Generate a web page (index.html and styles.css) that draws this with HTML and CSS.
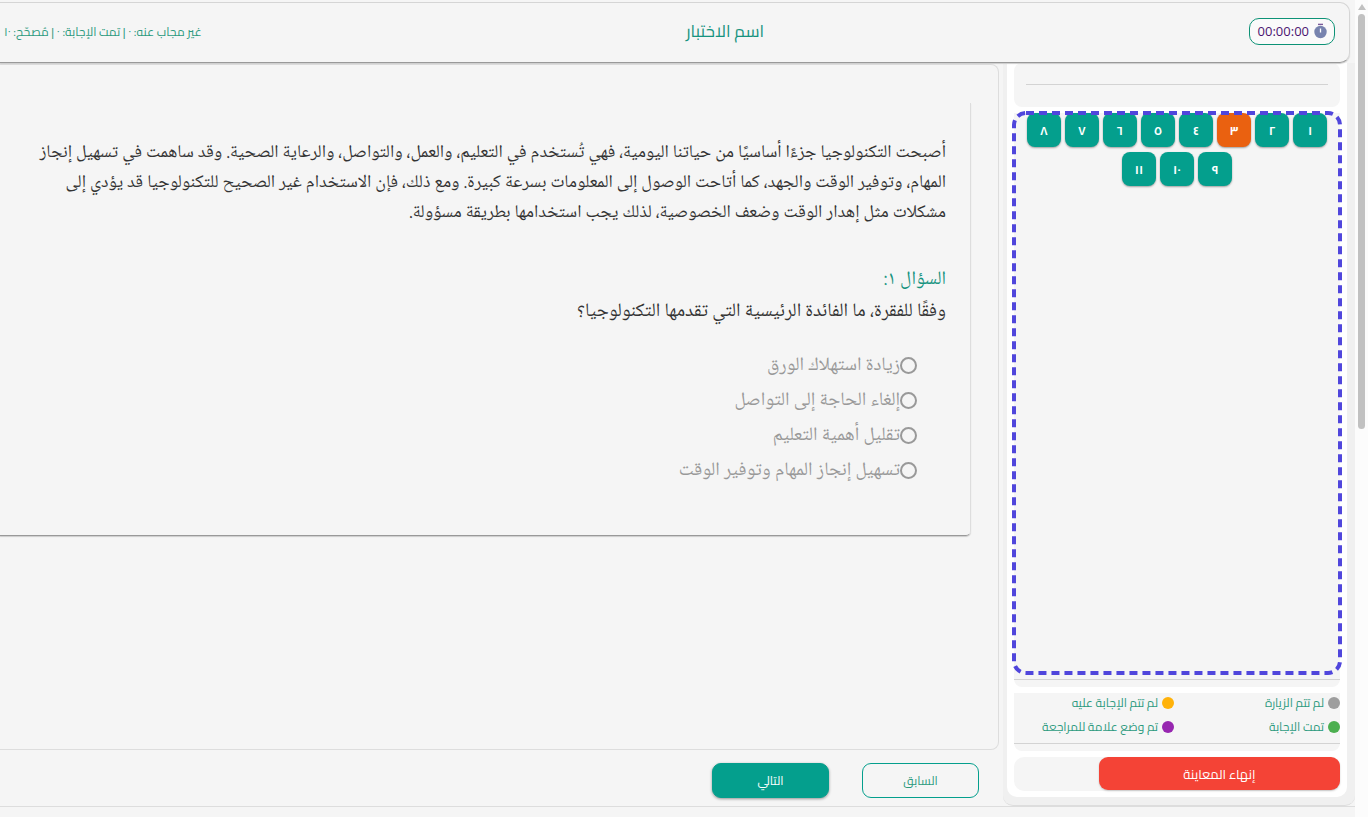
FILE: index.html
```html
<!DOCTYPE html>
<html lang="ar" dir="rtl">
<head>
    <meta charset="UTF-8">
    <meta name="viewport" content="width=device-width, initial-scale=1.0">
    <title>اسم الاختبار</title>
    <link rel="stylesheet" href="styles.css">
</head>
<body>
    <div class="scrollbar">
        <span class="scroll-arrow"></span>
        <span class="scroll-thumb"></span>
    </div>

    <div class="app">
        <header class="topbar">
            <div class="timer">
                <svg width="13" height="16" viewBox="0 0 13 16">
                    <path d="M4 1.4h5" stroke="#7a5a9a" stroke-width="1.4"/>
                    <circle cx="6.5" cy="9" r="6.2" fill="#7783ae"/>
                    <path d="M6.5 5.5v4" stroke="#fff" stroke-width="1.3"/>
                </svg>
                <span>00:00:00</span>
            </div>
            <h1 class="title">اسم الاختبار</h1>
            <div class="stats">غير مجاب عنه: ٠ | تمت الإجابة: ٠ | مُصحّح: ١٠</div>
        </header>

        <div class="layout">
            <aside class="sidebar">
                <div class="sidebar-inner">
                    <div class="card card-top"><hr></div>

                    <div class="card card-questions">
                        <div class="question-area">
                            <button class="num">١</button>
                            <button class="num">٢</button>
                            <button class="num current">٣</button>
                            <button class="num">٤</button>
                            <button class="num">٥</button>
                            <button class="num">٦</button>
                            <button class="num">٧</button>
                            <button class="num">٨</button>
                            <button class="num">٩</button>
                            <button class="num">١٠</button>
                            <button class="num">١١</button>
                            <svg class="dashes"><rect width="100%" height="100%" rx="12"/></svg>
                        </div>
                        <hr>
                    </div>

                    <div class="card card-legend">
                        <ul class="legend">
                            <li><i class="dot gray"></i>لم تتم الزيارة</li>
                            <li><i class="dot amber"></i>لم تتم الإجابة عليه</li>
                            <li><i class="dot green"></i>تمت الإجابة</li>
                            <li><i class="dot purple"></i>تم وضع علامة للمراجعة</li>
                        </ul>
                        <hr>
                    </div>

                    <div class="card card-finish">
                        <button class="finish">إنهاء المعاينة</button>
                    </div>
                </div>
            </aside>

            <main class="content">
                <section class="panel">
                    <div class="question">
                        <p class="passage">أصبحت التكنولوجيا جزءًا أساسيًا من حياتنا اليومية، فهي تُستخدم في التعليم، والعمل، والتواصل، والرعاية الصحية. وقد ساهمت في تسهيل إنجاز<br>المهام، وتوفير الوقت والجهد، كما أتاحت الوصول إلى المعلومات بسرعة كبيرة. ومع ذلك، فإن الاستخدام غير الصحيح للتكنولوجيا قد يؤدي إلى<br>مشكلات مثل إهدار الوقت وضعف الخصوصية، لذلك يجب استخدامها بطريقة مسؤولة.</p>
                        <h2 class="question-number">السؤال ١:</h2>
                        <p class="question-text">وفقًا للفقرة، ما الفائدة الرئيسية التي تقدمها التكنولوجيا؟</p>
                        <div class="options">
                            <label class="option"><input type="radio" name="answer">زيادة استهلاك الورق</label>
                            <label class="option"><input type="radio" name="answer">إلغاء الحاجة إلى التواصل</label>
                            <label class="option"><input type="radio" name="answer">تقليل أهمية التعليم</label>
                            <label class="option"><input type="radio" name="answer">تسهيل إنجاز المهام وتوفير الوقت</label>
                        </div>
                    </div>
                </section>
                <footer class="actions">
                    <button class="btn btn-outline">السابق</button>
                    <button class="btn btn-primary">التالي</button>
                </footer>
            </main>
        </div>
    </div>
</body>
</html>
```
FILE: styles.css
```css
* {
    box-sizing: border-box;
}

body {
    margin: 0;
    height: 100vh;
    display: flex;
    overflow: hidden;
    background-color: #f5f5f5;
    color: #333;
    font-family: "Cairo", "DejaVu Sans", sans-serif;
}

button {
    font-family: inherit;
    cursor: pointer;
    padding: 0;
}

hr {
    border: none;
    border-top: 1px solid #d3d3d3;
    margin: 0;
}

/* Scrollbar */
.scrollbar {
    width: 13px;
    flex: none;
    background-color: #fcfcfc;
    display: flex;
    flex-direction: column;
    align-items: center;
    gap: 4px;
    padding-top: 4px;
}

.scroll-arrow {
    border: 4px solid transparent;
    border-top: none;
    border-bottom: 6px solid #c1c1c1;
}

.scroll-thumb {
    width: 7px;
    height: 51%;
    border-radius: 4px;
    background-color: #c1c1c1;
}

.app {
    flex: 1;
    min-width: 0;
    display: flex;
    flex-direction: column;
    padding: 2px 0 10px;
}

/* Header */
.topbar {
    display: flex;
    justify-content: space-between;
    align-items: center;
    height: 61px;
    margin-right: 5px;
    padding: 0 14px 3px 4px;
    border: 1px solid #d5d5d5;
    border-left: none;
    border-bottom: 1px solid #999;
    border-radius: 0 10px 10px 0;
    box-shadow: 0 1px 1px #ccc;
    position: relative;
}

.timer {
    display: flex;
    align-items: center;
    gap: 5px;
    height: 27px;
    padding: 0 7px 0 8px;
    border: 1px solid #0d9276;
    border-radius: 10px;
    background-color: #fafafa;
    color: #4a1470;
    font: 13px "Open Sans", sans-serif;
}

.title {
    margin: 0;
    font-size: 17px;
    font-weight: normal;
    line-height: 30px;
    color: #16937f;
}

.stats {
    font-size: 12px;
    color: #2c9a7e;
}

.layout {
    flex: 1;
    min-height: 0;
    display: flex;
    border-bottom: 1px solid #ddd;
}

/* Sidebar */
.sidebar {
    width: 352px;
    flex: none;
    padding: 0 8px 8px 4px;
    background-color: #f0f0f0;
    border-bottom: 1px solid #ddd;
    border-radius: 0 0 10px 10px;
}

.sidebar-inner {
    height: 100%;
    display: flex;
    flex-direction: column;
    gap: 6px;
    padding: 0 7px 6px;
    background-color: #fff;
    border-radius: 0 0 10px 10px;
}

.card {
    background-color: #f5f5f5;
    border-radius: 0 0 8px 8px;
}

.card-top {
    height: 44px;
    padding: 21px 12px 0;
    border-radius: 8px;
}

.card-questions {
    flex: 1;
    display: flex;
    flex-direction: column;
    gap: 6px;
    padding-bottom: 7px;
}

.question-area {
    position: relative;
    flex: 1;
    display: flex;
    flex-wrap: wrap;
    justify-content: center;
    align-content: flex-start;
    gap: 5px 4px;
    padding: 0 12px;
}

.dashes {
    position: absolute;
    inset: 0;
    width: 100%;
    height: 100%;
    overflow: visible;
    pointer-events: none;
}

.dashes rect {
    fill: none;
    stroke: #5046dc;
    stroke-width: 4px;
    stroke-dasharray: 8 5;
}

.num {
    width: 34px;
    height: 34px;
    border: none;
    border-radius: 8px;
    background-color: #049f8d;
    color: #fff;
    font-size: 12px;
    font-weight: bold;
    box-shadow: 0 1px 2px rgba(0,0,0,0.35);
}

.num.current {
    background-color: #ea6110;
}

.card-legend {
    padding-bottom: 7px;
}

.legend {
    display: grid;
    grid-template-columns: 1fr 1fr;
    column-gap: 6px;
    row-gap: 5px;
    height: 50px;
    margin: 0;
    padding: 0 0 7px;
    list-style: none;
    font-size: 12px;
    line-height: 18px;
    color: #2c9a7e;
}

.legend li {
    display: flex;
    align-items: center;
    gap: 4px;
    white-space: nowrap;
}

.dot {
    width: 12px;
    height: 12px;
    border-radius: 50%;
}

.gray { background-color: #9e9e9e; }
.amber { background-color: #ffb20a; }
.green { background-color: #4caf50; }
.purple { background-color: #9727b0; }

.card-finish {
    height: 34px;
    border-radius: 10px;
}

.finish {
    width: 74%;
    height: 33px;
    border: none;
    border-radius: 9px;
    background-color: #f44336;
    color: #fff;
    font-size: 13px;
    box-shadow: 0 1px 2px rgba(0,0,0,0.2);
}

/* Question */
.content {
    flex: 1;
    min-width: 0;
    display: flex;
    flex-direction: column;
    padding: 1px 4px 0 0;
}

.panel {
    flex: 1;
    padding: 38px 27px 0 0;
    border: 1px solid #ddd;
    border-left: none;
    border-radius: 0 8px 8px 0;
}

.question {
    padding: 35px 24px 47px 0;
    border-right: 1px solid #ddd;
    border-bottom: 1px solid #999;
    border-radius: 0 0 5px 0;
    box-shadow: 0 1px 1px #ccc;
    font-family: "Noto Naskh Arabic", "DejaVu Sans", serif;
    font-size: 19px;
}

.passage {
    margin: 0 0 36px;
    font-size: 18px;
    line-height: 30px;
    white-space: nowrap;
}

.question-number {
    margin: 0;
    font-size: 19px;
    font-weight: normal;
    line-height: 32px;
    color: #16937f;
}

.question-text {
    margin: 0 0 20px;
    line-height: 32px;
}

.options {
    padding-right: 29px;
}

.option {
    display: flex;
    align-items: center;
    height: 35px;
    color: #999;
}

.option input {
    appearance: none;
    width: 17px;
    height: 17px;
    margin: 0;
    border: 2px solid #999;
    border-radius: 50%;
}

.actions {
    display: flex;
    align-items: center;
    gap: 33px;
    height: 56px;
    padding: 4px 20px 0 0;
}

.btn {
    width: 117px;
    height: 35px;
    border: 1px solid #049f8d;
    border-radius: 9px;
    font-size: 12px;
}

.btn-outline {
    background-color: transparent;
    color: #2c9a7e;
}

.btn-primary {
    background-color: #049f8d;
    color: #fff;
    box-shadow: 0 1px 3px rgba(0,0,0,0.4);
}
```
